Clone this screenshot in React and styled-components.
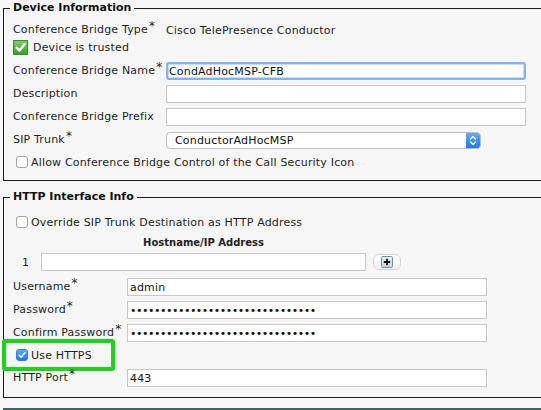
import React from "react";
import styled, { createGlobalStyle, css } from "styled-components";

const Global = createGlobalStyle`
  html, body {
    margin: 0;
    padding: 0;
    background: #f6f6f6;
    overflow: hidden;
  }
  body {
    font-family: "DejaVu Sans", Verdana, sans-serif;
    font-size: 11px;
    letter-spacing: 0.18px;
    color: #1e1e1e;
  }
`;

const Page = styled.div`
  width: 640px;
  padding-left: 3px;
`;

const Section = styled.fieldset`
  margin: ${(p) => p.$gap}px 0 0 0;
  padding: 0 0 ${(p) => p.$bottom}px 9px;
  border: 1px solid #1a1a1a;
  min-width: 0;
`;

const Legend = styled.legend`
  padding: 0 3px;
  margin-left: -3px;
  font-weight: bold;
  font-size: 11px;
  line-height: 16px;
  letter-spacing: 0;
  color: #111;
`;

const Row = styled.div`
  position: relative;
  display: flex;
  align-items: center;
  height: ${(p) => p.$h ?? 18}px;
  margin-top: ${(p) => p.$top}px;
  white-space: nowrap;
`;

const Label = styled.span`
  flex: none;
  width: ${(p) => p.$w}px;
  line-height: 14px;
`;

const Req = styled.span`
  font-size: 12px;
  line-height: 0;
  vertical-align: 3px;
  margin-left: 1px;
`;

const Value = styled.span`
  color: #1e1e1e;
`;

const Field = styled.input`
  box-sizing: border-box;
  flex: none;
  width: ${(p) => p.$w}px;
  height: 18px;
  margin: 0;
  padding: 0 2px;
  border: 1px solid #c8c8c8;
  border-radius: 0;
  background: #fff;
  font: inherit;
  letter-spacing: 0.18px;
  color: #111;
  outline: none;
  ${(p) =>
    p.$focused &&
    css`
      border: 2px solid #84b4ef;
      border-radius: 3px;
      padding: 0 1px;
      box-shadow: inset 0 0 0 1px #c7dcf8;
    `}
  ${(p) =>
    p.type === "password" &&
    css`
      letter-spacing: -0.5px;
      padding-left: 2px;
    `}
`;

const Select = styled.div`
  box-sizing: border-box;
  flex: none;
  display: flex;
  align-items: center;
  width: 315px;
  height: 17px;
  border: 1px solid #bcbcbc;
  border-radius: 4px;
  background: #fff;
  overflow: hidden;
`;

const SelectText = styled.span`
  flex: 1;
  padding-left: 8px;
  color: #111;
`;

const SelectArrow = styled.span`
  align-self: stretch;
  width: 14px;
  display: flex;
  align-items: center;
  justify-content: center;
  background: linear-gradient(#62acfb, #1f78ee);
`;

const Box = styled.span`
  box-sizing: border-box;
  flex: none;
  display: flex;
  align-items: center;
  justify-content: center;
  width: 12px;
  height: 12px;
  margin: 0 3px;
  border-radius: 3px;
  border: 1px solid ${(p) => (p.$checked ? "#2a7be6" : "#a3a3a3")};
  background: ${(p) =>
    p.$checked ? "linear-gradient(#5fabfb, #1f7bef)" : "#fff"};
`;

const TrustIcon = styled.span`
  box-sizing: border-box;
  flex: none;
  display: flex;
  align-items: center;
  justify-content: center;
  width: 15px;
  height: 15px;
  margin-right: 5px;
  border: 1px solid #3f8a33;
  background: linear-gradient(#7ccf63, #35a12b);
`;

const Number = styled.span`
  flex: none;
  width: 19px;
  padding-left: 9px;
`;

const ColumnHead = styled.div`
  margin-left: 28px;
  width: 325px;
  text-align: center;
  font-weight: bold;
  font-size: 10px;
  line-height: 14px;
  letter-spacing: 0;
  color: #222;
`;

const AddButton = styled.button`
  box-sizing: border-box;
  flex: none;
  display: flex;
  align-items: center;
  justify-content: center;
  width: 28px;
  height: 16px;
  margin: 0 0 0 7px;
  padding: 0;
  border: 1px solid #d3d3d3;
  border-radius: 6px;
  background: linear-gradient(#ffffff, #f0f0f0);
`;

const Highlight = styled.span`
  position: absolute;
  left: -11px;
  top: -7px;
  box-sizing: border-box;
  width: 113px;
  height: 32px;
  border: 4px solid #1bd51b;
  border-radius: 3px;
  pointer-events: none;
`;

const Footer = styled.div`
  margin-top: 10px;
  height: 20px;
  border-top: 2px solid #2e6b6b;
`;

const Check = ({ color = "#fff", size = 9, weight = 2 }) => (
  <svg width={size} height={size} viewBox="0 0 10 10">
    <path
      d="M1.5 5.3 L4 7.8 L8.7 2"
      fill="none"
      stroke={color}
      strokeWidth={weight}
      strokeLinecap="round"
      strokeLinejoin="round"
    />
  </svg>
);

const UpDown = () => (
  <svg width="8" height="11" viewBox="0 0 8 11">
    <path
      d="M1.5 4 L4 1.5 L6.5 4 M1.5 7 L4 9.5 L6.5 7"
      fill="none"
      stroke="#fff"
      strokeWidth="1.4"
      strokeLinecap="round"
      strokeLinejoin="round"
    />
  </svg>
);

const PlusIcon = () => (
  <svg width="12" height="12" viewBox="0 0 12 12">
    <defs>
      <linearGradient id="plusFill" x1="0" y1="0" x2="0" y2="1">
        <stop offset="0" stopColor="#e9eef5" />
        <stop offset="1" stopColor="#c9d3df" />
      </linearGradient>
    </defs>
    <rect x="0.5" y="0.5" width="11" height="11" rx="1" fill="url(#plusFill)" stroke="#6f8db2" />
    <path d="M6 2.8 V9.2 M2.8 6 H9.2" stroke="#111" strokeWidth="1.8" />
  </svg>
);

const required = (text) => (
  <>
    {text}
    <Req>*</Req>
  </>
);

export default function App() {
  return (
    <Page>
      <Global />
      <Section $gap={0} $bottom={9}>
        <Legend>Device Information</Legend>
        <Row $top={6} $h={16}>
          <Label $w={153}>{required("Conference Bridge Type")}</Label>
          <Value>Cisco TelePresence Conductor</Value>
        </Row>
        <Row $top={1} $h={17}>
          <TrustIcon>
            <Check size={11} weight={2.2} />
          </TrustIcon>
          Device is trusted
        </Row>
        <Row $top={6}>
          <Label $w={153}>{required("Conference Bridge Name")}</Label>
          <Field $w={360} $focused readOnly value="CondAdHocMSP-CFB" />
        </Row>
        <Row $top={5}>
          <Label $w={153}>Description</Label>
          <Field $w={360} readOnly value="" />
        </Row>
        <Row $top={5}>
          <Label $w={153}>Conference Bridge Prefix</Label>
          <Field $w={360} readOnly value="" />
        </Row>
        <Row $top={5}>
          <Label $w={153}>{required("SIP Trunk")}</Label>
          <Select>
            <SelectText>ConductorAdHocMSP</SelectText>
            <SelectArrow>
              <UpDown />
            </SelectArrow>
          </Select>
        </Row>
        <Row $top={4}>
          <Box />
          Allow Conference Bridge Control of the Call Security Icon
        </Row>
      </Section>

      <Section $gap={8} $bottom={10}>
        <Legend>HTTP Interface Info</Legend>
        <Row $top={8}>
          <Box />
          Override SIP Trunk Destination as HTTP Address
        </Row>
        <Row $top={5} $h={14}>
          <ColumnHead>Hostname/IP Address</ColumnHead>
        </Row>
        <Row $top={3}>
          <Number>1</Number>
          <Field $w={325} readOnly value="" />
          <AddButton type="button" aria-label="Add">
            <PlusIcon />
          </AddButton>
        </Row>
        <Row $top={7}>
          <Label $w={114}>{required("Username")}</Label>
          <Field $w={360} readOnly value="admin" />
        </Row>
        <Row $top={5}>
          <Label $w={114}>{required("Password")}</Label>
          <Field $w={360} type="password" readOnly value={"x".repeat(31)} />
        </Row>
        <Row $top={5}>
          <Label $w={114}>{required("Confirm Password")}</Label>
          <Field $w={360} type="password" readOnly value={"x".repeat(31)} />
        </Row>
        <Row $top={4}>
          <Box $checked>
            <Check size={8} weight={1.8} />
          </Box>
          Use HTTPS
          <Highlight />
        </Row>
        <Row $top={5}>
          <Label $w={114}>{required("HTTP Port")}</Label>
          <Field $w={360} readOnly value="443" />
        </Row>
      </Section>
      <Footer />
    </Page>
  );
}
